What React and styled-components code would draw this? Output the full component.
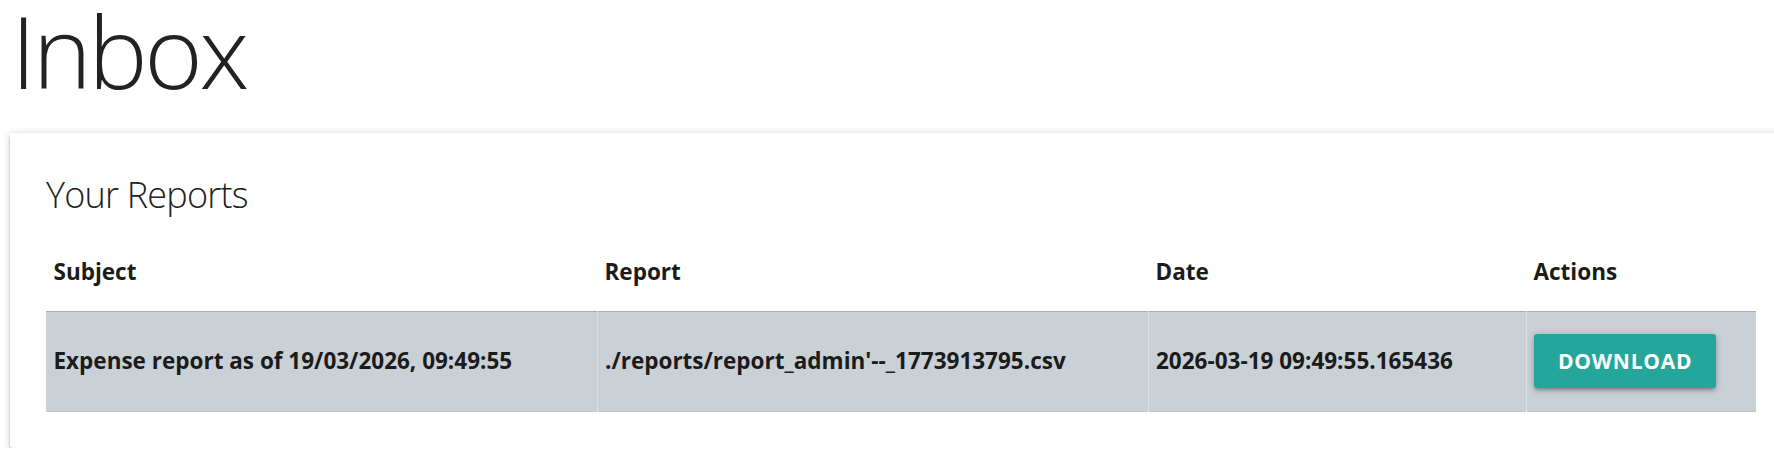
import styled, { createGlobalStyle } from 'styled-components';

const GlobalStyle = createGlobalStyle`
  html, body {
    margin: 0;
    padding: 0;
    background: #ffffff;
    overflow: hidden;
  }
  body {
    font-family: "Open Sans", "Noto Sans", "Liberation Sans", sans-serif;
    color: #212121;
  }
`;

const reports = [
  {
    subject: 'Expense report as of 19/03/2026, 09:49:55',
    report: "./reports/report_admin'--_1773913795.csv",
    date: '2026-03-19 09:49:55.165436',
  },
];

export default function App() {
  return (
    <>
      <GlobalStyle />
      <Page>
        <PageTitle>Inbox</PageTitle>
        <Card>
          <CardTitle>Your Reports</CardTitle>
          <Table>
            <colgroup>
              <col style={{ width: 551 }} />
              <col style={{ width: 551 }} />
              <col style={{ width: 378 }} />
              <col style={{ width: 230 }} />
            </colgroup>
            <thead>
              <tr>
                <HeadCell>Subject</HeadCell>
                <HeadCell>Report</HeadCell>
                <HeadCell>Date</HeadCell>
                <HeadCell>Actions</HeadCell>
              </tr>
            </thead>
            <tbody>
              {reports.map((r) => (
                <BodyRow key={r.report}>
                  <Cell>{r.subject}</Cell>
                  <Cell>{r.report}</Cell>
                  <Cell>{r.date}</Cell>
                  <Cell>
                    <DownloadButton type="button">Download</DownloadButton>
                  </Cell>
                </BodyRow>
              ))}
            </tbody>
          </Table>
        </Card>
      </Page>
    </>
  );
}

const Page = styled.div`
  width: 1793px;
  padding: 0 0 0 10px;
  box-sizing: border-box;
`;

const PageTitle = styled.h1`
  margin: 0 0 33px 1px;
  font-size: 100px;
  line-height: 100px;
  font-weight: 300;
  letter-spacing: -3.5px;
  color: #222222;
`;

const Card = styled.div`
  background: #ffffff;
  border-radius: 3px;
  padding: 36px;
  box-shadow: 0 3px 3px 0 rgba(0, 0, 0, 0.14), 0 4px 1.5px -3px rgba(0, 0, 0, 0.12),
    0 1.5px 7px 0 rgba(0, 0, 0, 0.2);
`;

const CardTitle = styled.span`
  display: block;
  font-size: 36px;
  line-height: 48px;
  font-weight: 300;
  letter-spacing: -0.8px;
  color: #212121;
  margin: 2px 0 13px;
`;

const Table = styled.table`
  width: 1710px;
  border-collapse: collapse;
  table-layout: fixed;
`;

const HeadCell = styled.th`
  text-align: left;
  padding: 22.5px 7.5px;
  font-size: 22.5px;
  line-height: 33.75px;
  font-weight: 700;
  color: #1b1b1b;
`;

const BodyRow = styled.tr`
  background: #c9d0d6;
  border-top: 1px solid #a8aeb3;
  border-bottom: 1px solid #bfc5ca;
`;

const Cell = styled.td`
  padding: 22.5px 7.5px;
  font-size: 22.5px;
  line-height: 33.75px;
  font-weight: 700;
  color: #1b1b1b;
  white-space: nowrap;

  & + & {
    border-left: 1px solid rgba(255, 255, 255, 0.35);
  }
`;

const DownloadButton = styled.button`
  height: 54px;
  padding: 0 24px;
  border: none;
  border-radius: 3px;
  background: #26a69a;
  color: #ffffff;
  font-family: inherit;
  font-size: 21px;
  font-weight: 700;
  letter-spacing: 0.75px;
  text-transform: uppercase;
  cursor: pointer;
  box-shadow: 0 3px 3px 0 rgba(0, 0, 0, 0.14), 0 4px 1.5px -3px rgba(0, 0, 0, 0.12),
    0 1.5px 7px 0 rgba(0, 0, 0, 0.2);
`;
